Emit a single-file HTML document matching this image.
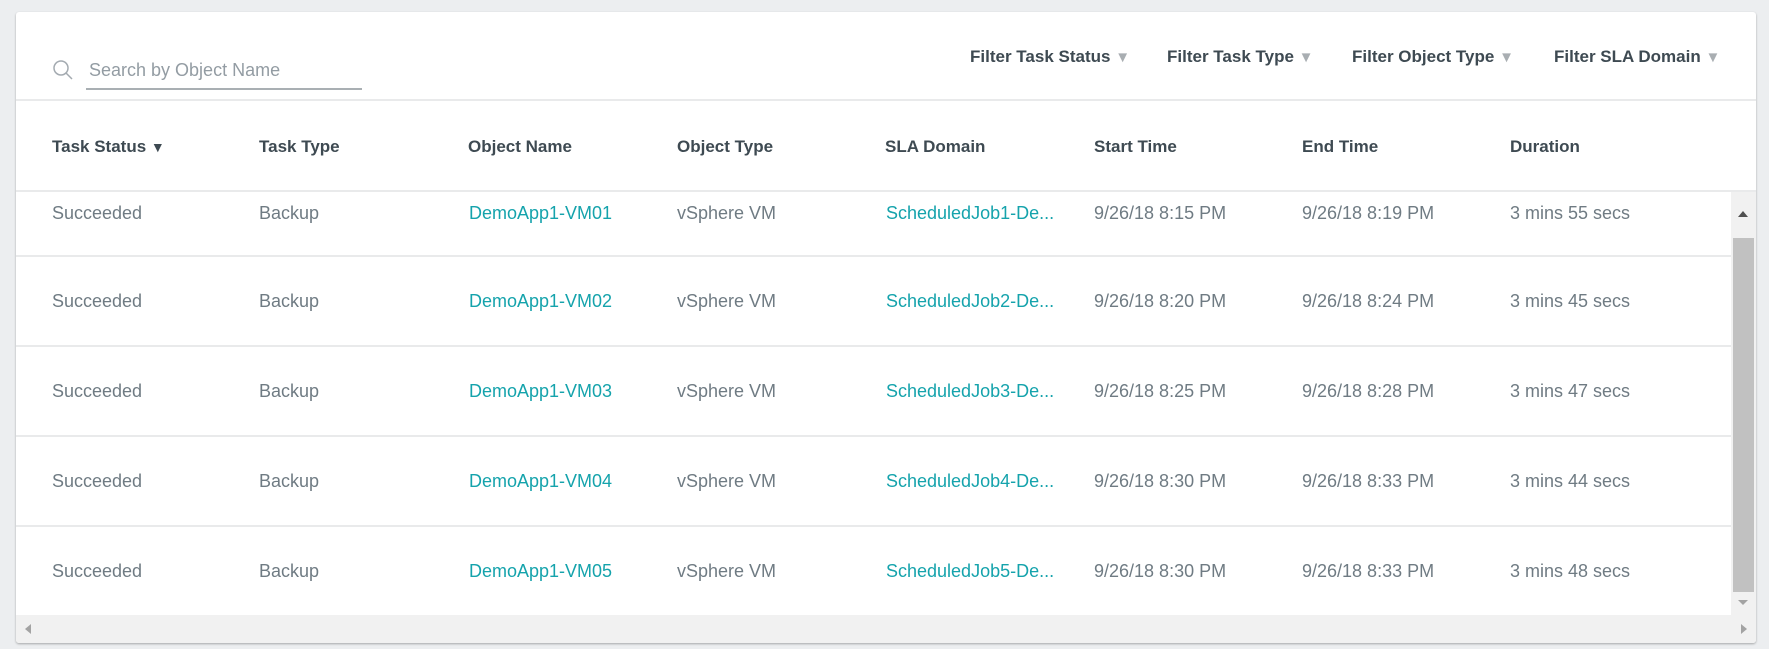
<!DOCTYPE html>
<html><head><meta charset="utf-8"><style>
*{margin:0;padding:0;box-sizing:border-box}
body{width:1769px;height:649px;background:#eceef0;font-family:"Liberation Sans",sans-serif;position:relative;overflow:hidden}
.card{position:absolute;left:16px;top:12px;width:1740px;height:631px;background:#fff;border-radius:3px;box-shadow:0 1px 2px rgba(0,0,0,.3);overflow:hidden}
.a{position:absolute;white-space:nowrap;line-height:20px}
.h{font-weight:bold;color:#3e4a52;font-size:17px}
.t{color:#6f7b83;font-size:18px}
.l{color:#15a3ac;font-size:18px}
.f{font-weight:bold;color:#3e4a52;font-size:17px}
.ar{color:#a9aeb2;font-size:15px}
.div{position:absolute;left:0;height:2px;background:#e9eaeb}
</style></head><body>
<div class="card">
<svg class="a" style="left:36px;top:47px" width="22" height="22" viewBox="0 0 22 22"><circle cx="9" cy="9" r="7" fill="none" stroke="#a3aab0" stroke-width="1.5"/><line x1="14" y1="14" x2="20" y2="20" stroke="#a3aab0" stroke-width="1.5"/></svg>
<div class="a t" style="left:73px;top:48px;color:#939ca3">Search by Object Name</div>
<div style="position:absolute;left:70px;top:76px;width:276px;height:2px;background:#a9afb3"></div>
<div class="a f" style="left:954px;top:35px">Filter Task Status <span class="ar">▼</span></div>
<div class="a f" style="left:1151px;top:35px">Filter Task Type <span class="ar">▼</span></div>
<div class="a f" style="left:1336px;top:35px">Filter Object Type <span class="ar">▼</span></div>
<div class="a f" style="left:1538px;top:35px">Filter SLA Domain <span class="ar">▼</span></div>
<div class="div" style="top:87px;width:1740px"></div>
<div class="a h" style="left:36px;top:125px">Task Status <span style="font-size:14px">▼</span></div>
<div class="a h" style="left:243px;top:125px">Task Type</div>
<div class="a h" style="left:452px;top:125px">Object Name</div>
<div class="a h" style="left:661px;top:125px">Object Type</div>
<div class="a h" style="left:869px;top:125px">SLA Domain</div>
<div class="a h" style="left:1078px;top:125px">Start Time</div>
<div class="a h" style="left:1286px;top:125px">End Time</div>
<div class="a h" style="left:1494px;top:125px">Duration</div>
<div class="div" style="top:178px;width:1740px"></div>

<div class="a t" style="left:36px;top:191px">Succeeded</div><div class="a t" style="left:243px;top:191px">Backup</div><div class="a l" style="left:453px;top:191px">DemoApp1-VM01</div><div class="a t" style="left:661px;top:191px">vSphere VM</div><div class="a l" style="left:870px;top:191px">ScheduledJob1-De...</div><div class="a t" style="left:1078px;top:191px">9/26/18 8:15 PM</div><div class="a t" style="left:1286px;top:191px">9/26/18 8:19 PM</div><div class="a t" style="left:1494px;top:191px">3 mins 55 secs</div>
<div class="div" style="top:243px;width:1715px"></div>
<div class="a t" style="left:36px;top:279px">Succeeded</div><div class="a t" style="left:243px;top:279px">Backup</div><div class="a l" style="left:453px;top:279px">DemoApp1-VM02</div><div class="a t" style="left:661px;top:279px">vSphere VM</div><div class="a l" style="left:870px;top:279px">ScheduledJob2-De...</div><div class="a t" style="left:1078px;top:279px">9/26/18 8:20 PM</div><div class="a t" style="left:1286px;top:279px">9/26/18 8:24 PM</div><div class="a t" style="left:1494px;top:279px">3 mins 45 secs</div>
<div class="div" style="top:333px;width:1715px"></div>
<div class="a t" style="left:36px;top:369px">Succeeded</div><div class="a t" style="left:243px;top:369px">Backup</div><div class="a l" style="left:453px;top:369px">DemoApp1-VM03</div><div class="a t" style="left:661px;top:369px">vSphere VM</div><div class="a l" style="left:870px;top:369px">ScheduledJob3-De...</div><div class="a t" style="left:1078px;top:369px">9/26/18 8:25 PM</div><div class="a t" style="left:1286px;top:369px">9/26/18 8:28 PM</div><div class="a t" style="left:1494px;top:369px">3 mins 47 secs</div>
<div class="div" style="top:423px;width:1715px"></div>
<div class="a t" style="left:36px;top:459px">Succeeded</div><div class="a t" style="left:243px;top:459px">Backup</div><div class="a l" style="left:453px;top:459px">DemoApp1-VM04</div><div class="a t" style="left:661px;top:459px">vSphere VM</div><div class="a l" style="left:870px;top:459px">ScheduledJob4-De...</div><div class="a t" style="left:1078px;top:459px">9/26/18 8:30 PM</div><div class="a t" style="left:1286px;top:459px">9/26/18 8:33 PM</div><div class="a t" style="left:1494px;top:459px">3 mins 44 secs</div>
<div class="div" style="top:513px;width:1715px"></div>
<div class="a t" style="left:36px;top:549px">Succeeded</div><div class="a t" style="left:243px;top:549px">Backup</div><div class="a l" style="left:453px;top:549px">DemoApp1-VM05</div><div class="a t" style="left:661px;top:549px">vSphere VM</div><div class="a l" style="left:870px;top:549px">ScheduledJob5-De...</div><div class="a t" style="left:1078px;top:549px">9/26/18 8:30 PM</div><div class="a t" style="left:1286px;top:549px">9/26/18 8:33 PM</div><div class="a t" style="left:1494px;top:549px">3 mins 48 secs</div>

<div style="position:absolute;left:1715px;top:180px;width:25px;height:423px;background:#f1f1f1"></div>
<div style="position:absolute;left:1717px;top:226px;width:21px;height:354px;background:#c1c1c1"></div>
<div style="position:absolute;left:1722px;top:199px;width:0;height:0;border-left:5px solid transparent;border-right:5px solid transparent;border-bottom:6px solid #505050"></div>
<div style="position:absolute;left:1722px;top:588px;width:0;height:0;border-left:5px solid transparent;border-right:5px solid transparent;border-top:5px solid #a3a3a3"></div>
<div style="position:absolute;left:0;top:603px;width:1740px;height:28px;background:#f1f1f1"></div>
<div style="position:absolute;left:9px;top:612px;width:0;height:0;border-top:5px solid transparent;border-bottom:5px solid transparent;border-right:6px solid #a3a3a3"></div>
<div style="position:absolute;left:1725px;top:612px;width:0;height:0;border-top:5px solid transparent;border-bottom:5px solid transparent;border-left:6px solid #a3a3a3"></div>
</div>
</body></html>
